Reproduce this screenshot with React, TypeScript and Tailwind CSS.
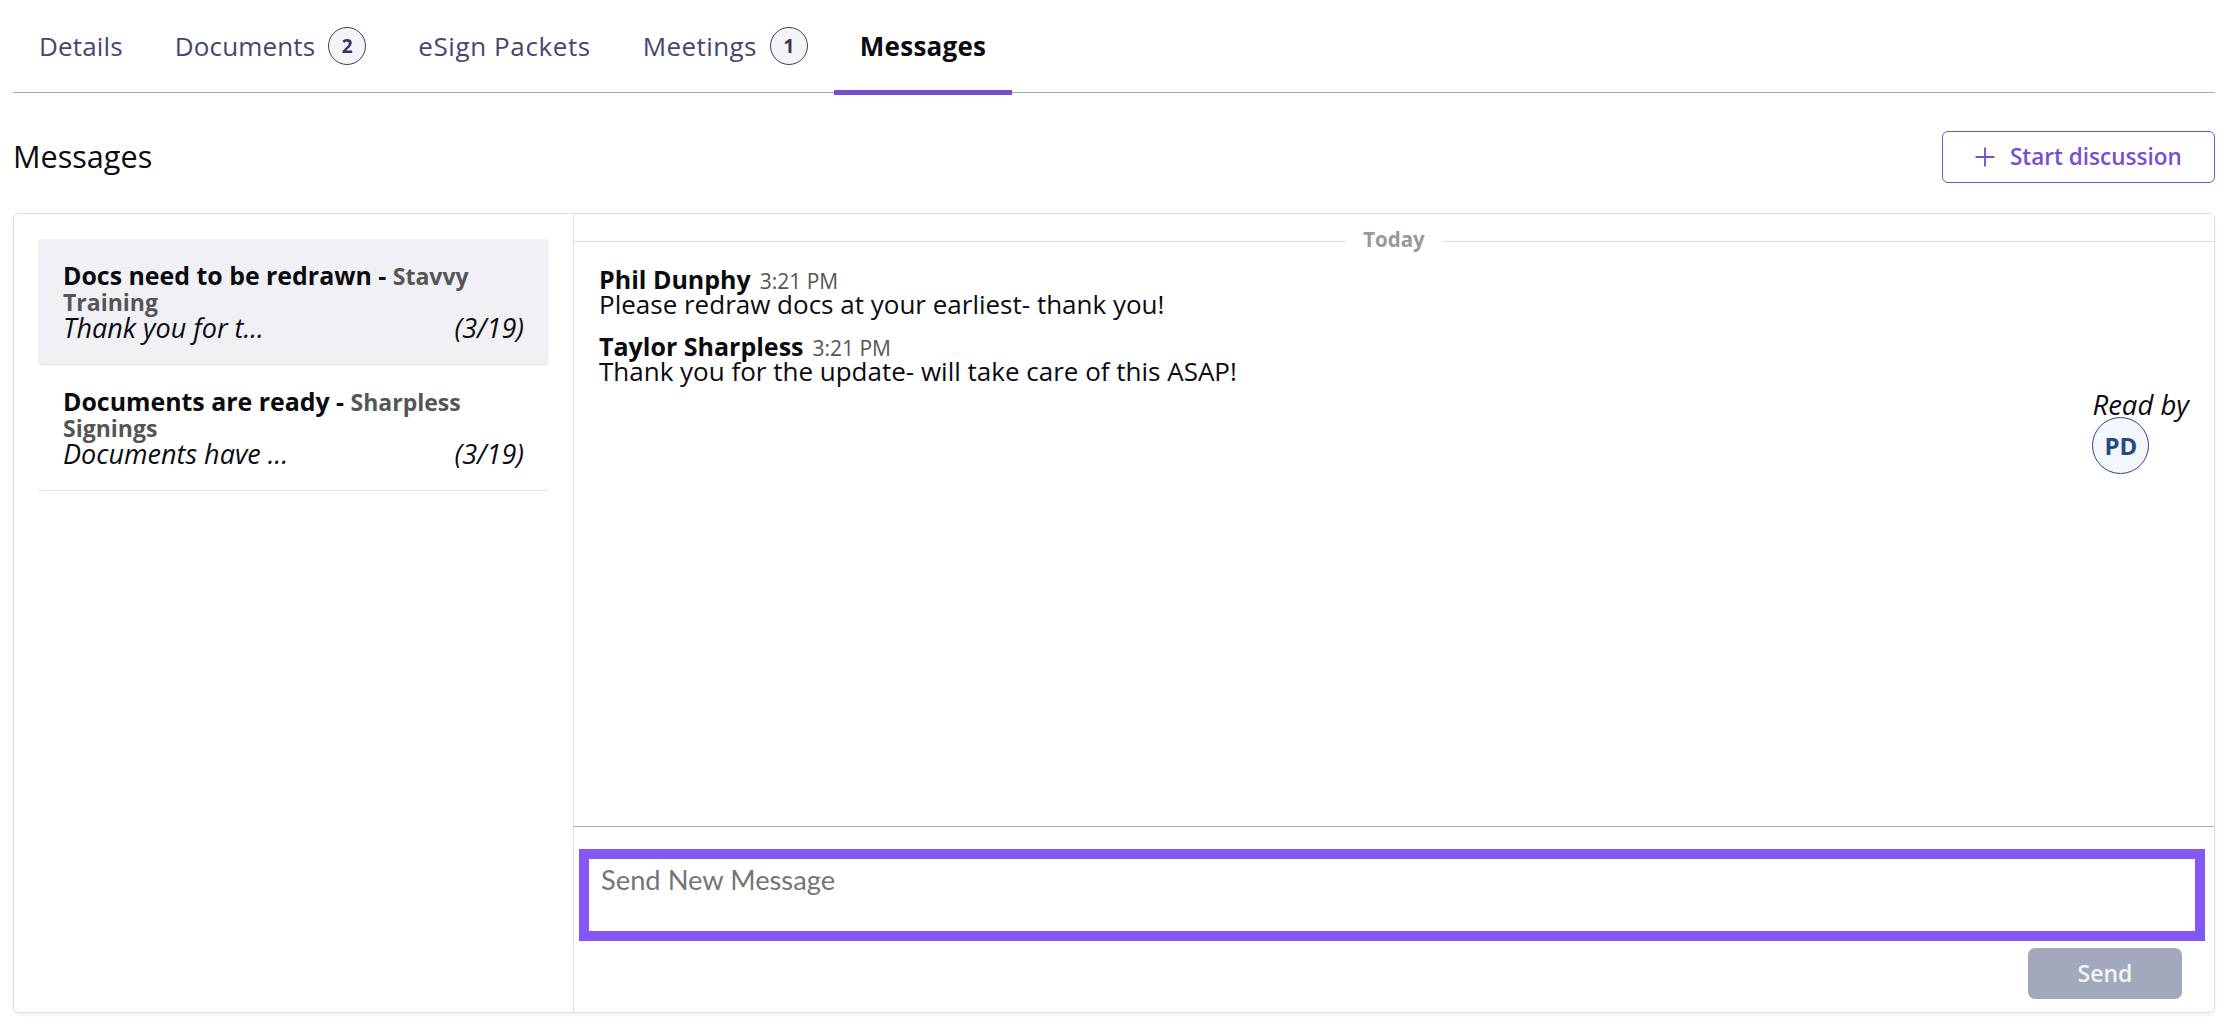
import { Plus } from 'lucide-react'

const threads = [
  { title: 'Docs need to be redrawn', org: 'Stavvy Training', preview: 'Thank you for t...', date: '(3/19)', active: true },
  { title: 'Documents are ready', org: 'Sharpless Signings', preview: 'Documents have ...', date: '(3/19)', active: false },
]

const messages = [
  { name: 'Phil Dunphy', time: '3:21 PM', text: 'Please redraw docs at your earliest- thank you!' },
  { name: 'Taylor Sharpless', time: '3:21 PM', text: 'Thank you for the update- will take care of this ASAP!' },
]

function Badge({ n }: { n: number }) {
  return (
    <span className="flex h-[38px] w-[38px] items-center justify-center rounded-full border border-[#3f3f63] bg-[#f3f4f8] text-[19px] font-bold tracking-normal text-[#35355a]">
      {n}
    </span>
  )
}

function Tab({ label, count, active, spacing }: { label: string; count?: number; active?: boolean; spacing: string }) {
  return (
    <div
      className={`relative flex h-full items-center gap-[13px] px-[26px] text-[26px] ${spacing} ${
        active ? 'font-bold text-[#0b0b12]' : 'text-[#46466c]'
      }`}
    >
      <span>{label}</span>
      {count !== undefined && <Badge n={count} />}
      {active && <div className="absolute right-0 bottom-[-2.5px] left-0 h-[5px] bg-[#7450d0]" />}
    </div>
  )
}

export default function App() {
  return (
    <div className="h-[1026px] bg-white pr-[15px] pl-[13px] font-['Open_Sans',sans-serif] text-[#0b0b12]">
      {/* Tabs */}
      <div className="flex h-[93px] items-stretch border-b-[1.5px] border-[#a3a5c6]">
        <Tab label="Details" spacing="tracking-[0.15px]" />
        <Tab label="Documents" count={2} spacing="tracking-[0.15px]" />
        <Tab label="eSign Packets" spacing="tracking-[0.6px]" />
        <Tab label="Meetings" count={1} spacing="tracking-[0.4px]" />
        <Tab label="Messages" active spacing="tracking-[0.25px]" />
      </div>

      {/* Header */}
      <div className="flex h-[120px] items-start justify-between pt-[38px]">
        <h2 className="text-[30.6px] leading-[50px]">Messages</h2>
        <button className="flex h-[52px] w-[273px] items-center gap-[10px] rounded-[6px] border-[1.5px] border-[#7450d0] pl-[27px] text-[22.5px] font-semibold text-[#7450d0]">
          <Plus className="h-[30px] w-[30px]" strokeWidth={1.5} />
          Start discussion
        </button>
      </div>

      {/* Card */}
      <div className="flex h-[800px] rounded-[6px] border-[1.5px] border-[#dedede] shadow-[0_2px_3px_rgba(0,0,0,0.06)]">
        <div className="w-[560px] shrink-0 border-r-[1.5px] border-[#dedee4] px-[24px] pt-[25px]">
          {threads.map((t) => (
            <div
              key={t.title}
              className={`h-[126px] rounded-[4px] border-b-[1.5px] border-[#e3e3e6] px-[25px] pt-[24px] ${
                t.active ? 'bg-[#f0f0f5]' : ''
              }`}
            >
              <div className="text-[24.9px] leading-[25px]">
                <span className="font-bold">{t.title} - </span>
                <span className="text-[23px] font-bold text-[#555555]">{t.org}</span>
              </div>
              <div className="flex justify-between text-[27px] leading-[25px] italic">
                <span>{t.preview}</span>
                <span>{t.date}</span>
              </div>
            </div>
          ))}
        </div>

        <div className="flex min-w-0 flex-1 flex-col">
          <div className="flex h-[28px] shrink-0 items-end">
            <div className="flex-1 border-b-[1.5px] border-[#dedede]" />
            <span className="h-[28px] px-[17px] text-[20.5px] leading-[50px] font-bold text-[#999999]">Today</span>
            <div className="flex-1 border-b-[1.5px] border-[#dedede]" />
          </div>

          <div className="flex flex-1 flex-col px-[25px] pt-[23px]">
            <div className="flex flex-col gap-[15px]">
              {messages.map((m) => (
                <div key={m.name}>
                  <div className="flex h-[26px] items-baseline text-[25px] leading-[28px]">
                    <span className="font-bold">{m.name}</span>
                    <span className="ml-[9px] text-[21px] text-[#555555]">{m.time}</span>
                  </div>
                  <div className="text-[26px] leading-[26px]">{m.text}</div>
                </div>
              ))}
            </div>
            <div className="mt-[8px] self-end">
              <div className="text-[27.5px] leading-[25px] italic">Read by</div>
              <div className="flex h-[57px] w-[57px] items-center justify-center rounded-full border border-[#2b4a7c] bg-[#f3f6fb] text-[24px] font-bold text-[#264a7f]">
                PD
              </div>
            </div>
          </div>

          <div className="h-[186px] shrink-0 border-t-[1.5px] border-[#9ea8c2] pt-[22px] pr-[9px] pl-[5px]">
            <textarea
              placeholder="Send New Message"
              className="block h-[92px] w-full resize-none border-[10px] border-[#8257f3] px-[12px] py-[8px] font-['Lato',sans-serif] text-[27.3px] leading-[26px] outline-none placeholder:text-[#757575]"
            />
            <div className="flex justify-end pt-[7px] pr-[23px]">
              <button className="h-[51px] w-[154px] rounded-[7px] bg-[#a3a9bc] text-[23px] font-semibold text-[#f3f4f8]">
                Send
              </button>
            </div>
          </div>
        </div>
      </div>
    </div>
  )
}
